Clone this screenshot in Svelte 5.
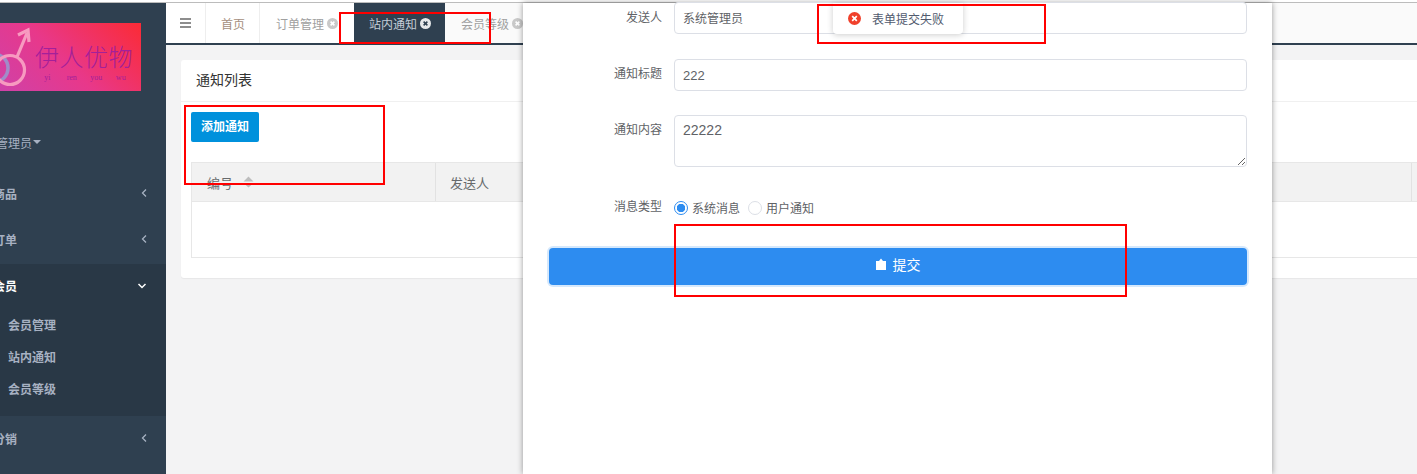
<script>
  const menu = [
    { name: '商品', top: true },
    { name: '订单', top: true }
  ];
  const children = ['会员管理', '站内通知', '会员等级'];
  const tabs = [
    { name: '首页' },
    { name: '订单管理', close: true },
    { name: '站内通知', close: true, active: true },
    { name: '会员等级', close: true }
  ];
  const marks = [
    { x: 339, y: 12, w: 152, h: 32 },
    { x: 184, y: 105, w: 201, h: 80 },
    { x: 817, y: 4, w: 229, h: 40 },
    { x: 674, y: 224, w: 453, h: 73 }
  ];
</script>

<div class="page">
  <div class="topline"></div>
  <div class="frame">
    <aside class="sidebar">
      <div class="logo">
        <svg class="logo-mark" viewBox="0 0 40 68" width="40" height="68">
          <circle cx="-6" cy="45" r="14" fill="none" stroke="#a08cc8" stroke-width="3.5"></circle>
          <circle cx="10" cy="47" r="14.5" fill="none" stroke="#f79ac0" stroke-width="3.2"></circle>
          <path d="M17 34 L27 10" fill="none" stroke="#f79ac0" stroke-width="3.2"></path>
          <path d="M18 12 L28 7 L29 19" fill="none" stroke="#f79ac0" stroke-width="3.2"></path>
        </svg>
        <div class="logo-text">
          <span class="logo-name">伊人优物</span>
          <span class="logo-pinyin"><i>yi</i><i>ren</i><i>you</i><i>wu</i></span>
        </div>
      </div>
      <div class="user">管理员<span class="caret"></span></div>
      {#each menu as item}
        <div class="item">
          <span>{item.name}</span>
          <svg width="8" height="10" viewBox="0 0 8 10"><path d="M6 1.5 L2.5 5 L6 8.5" fill="none" stroke="#a7b1c2" stroke-width="1.3"></path></svg>
        </div>
      {/each}
      <div class="group">
        <div class="item open">
          <span>会员</span>
          <svg width="10" height="8" viewBox="0 0 10 8"><path d="M1.5 2 L5 5.5 L8.5 2" fill="none" stroke="#fff" stroke-width="1.5"></path></svg>
        </div>
        {#each children as child}
          <div class="child">{child}</div>
        {/each}
      </div>
      <div class="item">
        <span>分销</span>
        <svg width="8" height="10" viewBox="0 0 8 10"><path d="M6 1.5 L2.5 5 L6 8.5" fill="none" stroke="#a7b1c2" stroke-width="1.3"></path></svg>
      </div>
    </aside>

    <main class="main">
      <nav class="tabs">
        <div class="burger"><span></span><span></span><span></span></div>
        {#each tabs as tab}
          <div class="tab" class:active={tab.active}>
            {tab.name}
            {#if tab.close}
              <svg class="close" width="11" height="11" viewBox="0 0 11 11">
                <circle cx="5.5" cy="5.5" r="5.5" fill={tab.active ? '#e6e8ea' : '#c9c9c9'}></circle>
                <path d="M3.6 3.6 L7.4 7.4 M7.4 3.6 L3.6 7.4" stroke={tab.active ? '#2f4050' : '#fff'} stroke-width="1.5"></path>
              </svg>
            {/if}
          </div>
        {/each}
      </nav>

      <div class="content">
        <section class="card">
          <h2>通知列表</h2>
          <div class="card-body">
            <button class="add">添加通知</button>
            <div class="table">
              <div class="thead">
                <div class="th first">
                  编号
                  <svg width="11" height="12" viewBox="0 0 11 12"><path d="M5.5 0.5 L10.5 5.5 H0.5 Z M0.5 7 H10.5 L5.5 11.5 Z" fill="#bdbdbd"></path></svg>
                </div>
                <div class="th second">发送人</div>
                <div class="th"></div>
              </div>
              <div class="tbody"></div>
            </div>
          </div>
        </section>
      </div>
    </main>
  </div>

  <div class="drawer">
    <div class="row first-row">
      <label for="sender">发送人</label>
      <input id="sender" value="系统管理员" />
    </div>
    <div class="row second-row">
      <label for="title">通知标题</label>
      <input id="title" value="222" />
    </div>
    <div class="row">
      <label for="body">通知内容</label>
      <textarea id="body">22222</textarea>
    </div>
    <div class="row radios">
      <span class="radio-label">消息类型</span>
      <div class="radio-group">
        <span class="radio on"></span><span class="radio-text">系统消息</span>
        <span class="radio"></span><span class="radio-text">用户通知</span>
      </div>
    </div>
    <button class="submit">
      <svg width="10" height="12" viewBox="0 0 10 12"><path d="M0 3 H3 L5 0.5 L7 3 H10 V12 H0 Z" fill="#fff"></path></svg>
      提交
    </button>
  </div>

  <div class="toast">
    <svg width="13" height="13" viewBox="0 0 13 13">
      <circle cx="6.5" cy="6.5" r="6.5" fill="#f0402b"></circle>
      <path d="M4.2 4.2 L8.8 8.8 M8.8 4.2 L4.2 8.8" stroke="#fff" stroke-width="1.7"></path>
    </svg>
    表单提交失败
  </div>

  {#each marks as m}
    <div class="mark" style="left:{m.x}px;top:{m.y}px;width:{m.w}px;height:{m.h}px"></div>
  {/each}
</div>

<style>
  :global(body) {
    margin: 0;
  }

  .page {
    position: relative;
    width: 1417px;
    height: 474px;
    overflow: hidden;
    background: #fff;
    font-family: "Liberation Sans", "Noto Sans CJK SC", sans-serif;
    font-size: 12px;
    color: #676a6c;
  }

  .topline {
    height: 1px;
    margin-top: 2px;
    background: #bcbcbc;
  }

  .frame {
    display: flex;
    height: 471px;
  }

  .sidebar {
    flex: 0 0 166px;
    background: #2f4050;
    color: #a7b1c2;
    overflow: hidden;
  }

  .logo {
    position: relative;
    width: 141px;
    height: 68px;
    margin-top: 20px;
    overflow: hidden;
    background: linear-gradient(45deg, #cf41a8 0%, #e8388a 45%, #fb2b35 100%);
  }

  .logo-mark {
    position: absolute;
    left: 0;
    top: 0;
  }

  .logo-text {
    position: absolute;
    left: 35px;
    top: 19px;
    color: #a3209a;
  }

  .logo-name {
    display: block;
    font-family: "Noto Sans CJK SC", sans-serif;
    font-size: 24px;
    font-weight: 300;
    line-height: 27px;
    letter-spacing: 0.5px;
    width: 100px;
    white-space: nowrap;
  }

  .logo-pinyin {
    display: flex;
    margin-top: 4px;
    font-family: "Liberation Serif", serif;
    font-size: 8px;
    line-height: 9px;
  }

  .logo-pinyin i {
    font-style: normal;
    width: 24.5px;
    text-align: center;
  }

  .user {
    display: flex;
    align-items: center;
    height: 18px;
    margin-top: 42px;
    margin-left: -4px;
    margin-bottom: 20px;
  }

  .caret {
    width: 0;
    height: 0;
    margin-left: 1px;
    border: 4px solid transparent;
    border-top-color: #a7b1c2;
    border-bottom: 0;
  }

  .item {
    display: flex;
    align-items: center;
    justify-content: space-between;
    box-sizing: border-box;
    height: 46px;
    margin-left: -7px;
    padding-right: 18px;
    padding-bottom: 2px;
    font-weight: 700;
  }

  .group {
    height: 152px;
    margin-top: 1px;
    background: #293846;
  }

  .item.open {
    height: 45px;
    color: #fff;
    padding-right: 19px;
  }

  .child {
    height: 32px;
    line-height: 34px;
    padding-left: 8px;
    font-weight: 700;
  }

  .main {
    flex: 1;
    min-width: 0;
    background: #f3f3f4;
  }

  .tabs {
    display: flex;
    height: 40px;
    background: #fafafa;
    border-bottom: 2px solid #2f4050;
  }

  .burger {
    display: flex;
    flex-direction: column;
    justify-content: center;
    gap: 2px;
    width: 40px;
    padding-left: 14px;
    box-sizing: border-box;
    background: #fff;
    border-right: 1px solid #eee;
  }

  .burger span {
    width: 11px;
    height: 2px;
    background: #8d8d8d;
  }

  .tab {
    display: flex;
    flex: none;
    align-items: center;
    gap: 3px;
    box-sizing: border-box;
    padding-left: 15px;
    background: #fff;
    border-right: 1px solid #eee;
    color: #a58f80;
    white-space: nowrap;
  }

  .tab:nth-child(2) {
    width: 54px;
  }

  .tab:nth-child(3) {
    width: 94px;
    padding-left: 16px;
    color: #a0a0a0;
    border-right: 0;
  }

  .tab.active {
    width: 91px;
    background: #2f4050;
    color: #c3ccd6;
    border-right: 0;
  }

  .tab:last-child {
    padding-left: 16px;
    background: transparent;
    border-right: 0;
    color: #a0a0a0;
  }

  .close {
    flex: none;
  }

  .content {
    padding: 15px 0 0 15px;
  }

  .card {
    height: 218px;
    margin-right: -15px;
    background: #fff;
    border-radius: 3px 0 0 3px;
    box-shadow: 0 1px 1px rgba(0, 0, 0, 0.05);
  }

  .card h2 {
    height: 41px;
    margin: 0;
    padding-left: 15px;
    border-bottom: 1px solid #f0f0f0;
    font-size: 14px;
    font-weight: 400;
    line-height: 41px;
    color: #333;
  }

  .card-body {
    padding: 10px 0 0 10px;
  }

  .add {
    display: block;
    width: 68px;
    height: 30px;
    padding: 0 0 3px;
    border: 0;
    border-radius: 2px;
    background: #0091dc;
    color: #fff;
    font: 700 12px "Liberation Sans", "Noto Sans CJK SC", sans-serif;
  }

  .table {
    margin-top: 20px;
    border: 1px solid #e7e7e7;
  }

  .thead {
    display: flex;
    height: 38px;
    background: #f2f2f2;
    border-bottom: 1px solid #e7e7e7;
  }

  .th {
    display: flex;
    align-items: center;
    gap: 10px;
    font-size: 13px;
    color: #676a6c;
  }

  .th.first {
    flex: 0 0 244px;
    box-sizing: border-box;
    padding-left: 15px;
    border-right: 1px solid #e2e2e2;
  }

  .th.second {
    flex: 0 0 976px;
    box-sizing: border-box;
    padding-left: 14px;
    border-right: 1px solid #e2e2e2;
  }

  .tbody {
    height: 55px;
  }

  .drawer {
    position: absolute;
    left: 523px;
    top: 3px;
    bottom: 0;
    width: 749px;
    box-sizing: border-box;
    padding: 0 25px 0 26px;
    background: #fff;
    box-shadow: 0 0 6px rgba(0, 0, 0, 0.4);
  }

  .row {
    display: grid;
    grid-template-columns: 113px 1fr;
    column-gap: 12px;
    margin-bottom: 25px;
  }

  .row label,
  .radio-label {
    text-align: right;
    line-height: 30px;
    color: #606266;
  }

  .row input,
  .row textarea {
    display: block;
    width: 100%;
    box-sizing: border-box;
    height: 32px;
    padding: 0 8px;
    border: 1px solid #dcdfe6;
    border-radius: 4px;
    background: #fff;
    color: #606266;
    font: 12px "Liberation Sans", "Noto Sans CJK SC", sans-serif;
    outline: none;
  }

  .first-row input {
    margin-top: -1px;
    padding-bottom: 2px;
  }

  .second-row {
    margin-bottom: 24px;
  }

  .second-row input {
    font-size: 13px;
  }

  .row textarea {
    height: 52px;
    padding: 5px 8px;
    font-size: 14px;
    line-height: 18px;
  }

  .radios {
    height: 30px;
    margin: 0 0 26px;
    align-items: center;
  }

  .radios .radio-label {
    line-height: 31px;
  }

  .radio-group {
    display: flex;
    align-items: center;
    height: 30px;
  }

  .radio {
    box-sizing: border-box;
    width: 14px;
    height: 14px;
    border: 1px solid #dcdfe6;
    border-radius: 50%;
  }

  .radio.on {
    border-color: #2d8cf0;
    background: radial-gradient(circle, #2d8cf0 0 4px, #fff 4.5px);
  }

  .radio-text {
    margin: 0 8px 0 4px;
    color: #606266;
  }

  .submit {
    display: flex;
    align-items: center;
    justify-content: center;
    gap: 7px;
    width: 100%;
    height: 37px;
    padding: 0 0 5px;
    border: 0;
    border-radius: 4px;
    background: #2d8cf0;
    box-shadow: 0 0 0 2px rgba(45, 140, 240, 0.2);
    color: #fff;
    font: 14px "Liberation Sans", "Noto Sans CJK SC", sans-serif;
  }

  .toast {
    position: absolute;
    left: 833px;
    top: 3px;
    display: flex;
    align-items: center;
    gap: 11px;
    width: 130px;
    height: 31px;
    box-sizing: border-box;
    padding-left: 15px;
    background: #fff;
    border-radius: 0 0 4px 4px;
    box-shadow: 0 1px 6px rgba(0, 0, 0, 0.2);
    color: #515a6e;
  }

  .mark {
    position: absolute;
    box-sizing: border-box;
    border: 2px solid #f00;
  }
</style>
